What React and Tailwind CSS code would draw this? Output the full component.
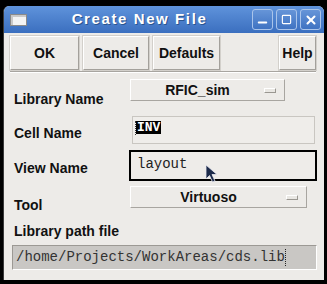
import { Minus, Square, X } from 'lucide-react'

const sans = { fontFamily: '"Liberation Sans", Arial, sans-serif' }

function TitleButton({ children }) {
  return (
    <div className="w-[21px] h-[21px] rounded-[3px] border border-[#a9c4ea] bg-gradient-to-b from-[#6695d8] to-[#3f73c2] flex items-center justify-center text-white">
      {children}
    </div>
  )
}

function DlgButton({ label, w }) {
  return (
    <div className={`${w} h-[34px] bg-[#edebe8] border border-t-white border-l-white border-b-[#a3a09b] border-r-[#a3a09b] shadow-[0_0_0_1px_#d3d0cb] flex items-center justify-center text-[14px] font-bold text-[#111]`}>
      {label}
    </div>
  )
}

function Combo({ value, w }) {
  return (
    <div className={`${w} h-[22px] bg-[#edebe8] border border-t-white border-l-white border-b-[#a8a5a0] border-r-[#a8a5a0] flex items-center`}>
      <span className="flex-1 text-center text-[14px] font-bold text-[#111] leading-none">{value}</span>
      <span className="w-[12px] h-[5px] mr-[8px] bg-[#e9e7e3] border border-t-white border-l-white border-b-[#9a9791] border-r-[#9a9791]" />
    </div>
  )
}

function Row({ label, h, lm, children }) {
  return (
    <div className={`flex ${h}`}>
      <div className={`w-[126px] shrink-0 pl-[10px] ${lm} text-[14px] leading-[16px] font-bold text-[#111]`}>{label}</div>
      <div>{children}</div>
    </div>
  )
}

export default function App() {
  return (
    <div className="w-[327px] h-[284px] bg-black pt-[6px] pl-[3px]" style={sans}>
      <div className="relative w-[321px] h-[274px] rounded-t-[6px] overflow-hidden bg-[#edebe8] flex flex-col border-l border-[#3a3a3a]">
        <div className="h-[27px] shrink-0 bg-gradient-to-b from-[#5f93db] to-[#3b6fbf] flex items-center pl-[6px] pr-[3px]">
          <div className="w-[17px] h-[12px] bg-[#f4f4f4] border border-[#8a8a8a] shadow-[inset_2px_2px_0_#c9c9c9]" />
          <div className="flex-1 text-center text-white font-bold text-[15px] tracking-[1.6px] [text-shadow:1px_1px_0_#2b558f]">Create New File</div>
          <div className="flex gap-[3px]">
            <TitleButton><Minus size={13} strokeWidth={3.5} className="mt-[6px]" /></TitleButton>
            <TitleButton><Square size={11} strokeWidth={2.5} /></TitleButton>
            <TitleButton><X size={14} strokeWidth={3.5} /></TitleButton>
          </div>
        </div>

        <div className="flex gap-[4px] pt-[3px] pl-[6px] pr-[8px]">
          <DlgButton label="OK" w="w-[69px]" />
          <DlgButton label="Cancel" w="w-[66px]" />
          <DlgButton label="Defaults" w="w-[67px]" />
          <div className="flex-1" />
          <DlgButton label="Help" w="w-[37px]" />
        </div>
        <div className="mt-[1px] ml-[6px] mr-[8px] border-t border-[#a8a5a0] border-b border-b-white" />

        <div className="pt-[4px]">
          <Row label="Library Name" h="h-[37px]" lm="mt-[14px]">
            <div className="mt-[2px]"><Combo value="RFIC_sim" w="w-[155px]" /></div>
          </Row>
          <Row label="Cell Name" h="h-[35px]" lm="mt-[11px]">
            <div className="mt-[2px] ml-[2px] w-[183px] h-[28px] bg-[#efedea] border border-[#c9c6c1] flex items-start pt-[3px] pl-[2px]">
              <span className="w-[1px] h-[14px] border-l border-dotted border-[#333] mt-[1px]" />
              <span className="bg-black text-white text-[13px] font-bold leading-[13px] px-[1px] mt-[1px]" style={{ fontFamily: '"Liberation Mono", monospace' }}>INV</span>
            </div>
          </Row>
          <Row label="View Name" h="h-[35px]" lm="mt-[11px]">
            <div className="mt-[1px] -ml-[1px] w-[188px] h-[31px] bg-[#eeece9] border-2 border-black pl-[6px] pt-[2px] text-[14px] text-[#222]" style={{ fontFamily: '"Liberation Mono", monospace' }}>
              layout
            </div>
          </Row>
          <Row label="Tool" h="h-[28px]" lm="mt-[13px]">
            <div className="mt-[2px]"><Combo value="Virtuoso" w="w-[177px]" /></div>
          </Row>
          <div className="mt-[11px] pl-[10px] text-[14px] leading-[16px] font-bold text-[#111]">Library path file</div>
          <div className="mt-[6px] ml-[8px] w-[305px] h-[25px] bg-[#c9c7c4] border border-t-[#9c9994] border-l-[#9c9994] border-b-white border-r-white flex items-center pl-[3px] text-[14px] text-[#333]" style={{ fontFamily: '"Liberation Mono", monospace' }}>
            <span>/home/Projects/WorkAreas/cds.lib</span>
            <span className="w-[2px] h-[17px] border-l border-dotted border-[#222]" />
          </div>
        </div>

        <svg className="absolute left-[201px] top-[158px]" width="13" height="20" viewBox="0 0 13 20">
          <path d="M1 1 L1 15 L4.5 11.5 L7.5 18 L10 17 L7 10.5 L12 10.5 Z" fill="#1c2a4a" stroke="#e8e8f0" strokeWidth="0.8" />
        </svg>
      </div>
    </div>
  )
}
